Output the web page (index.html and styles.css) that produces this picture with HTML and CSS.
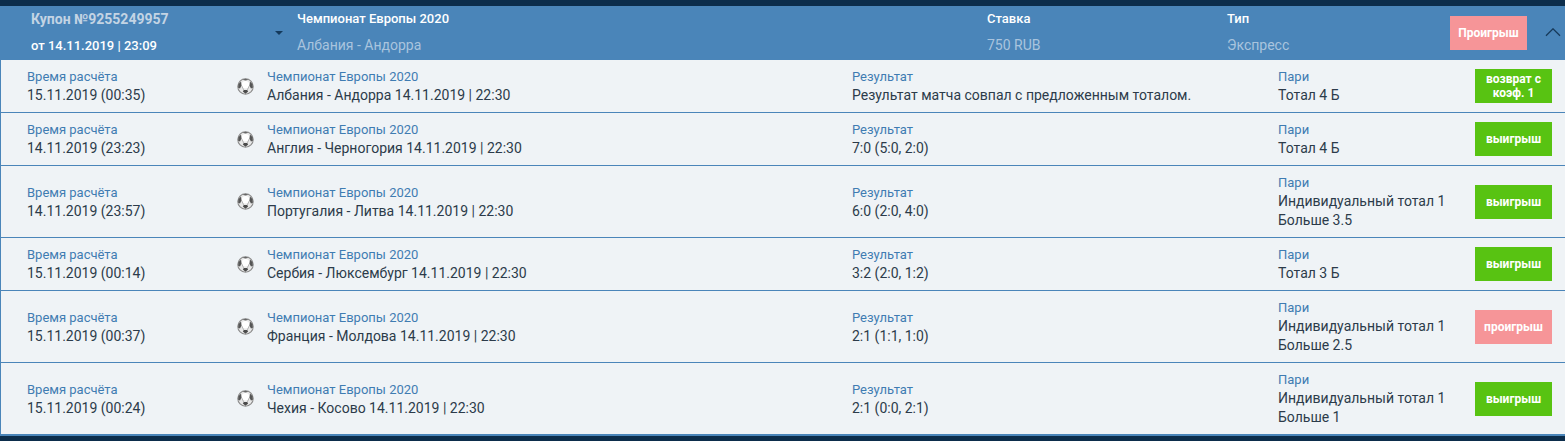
FILE: index.html
```html
<!DOCTYPE html>
<html lang="ru">
<head>
<meta charset="utf-8">
<title>Купон</title>
<link rel="stylesheet" href="styles.css">
</head>
<body>
<svg class="defs" width="0" height="0" aria-hidden="true">
  <defs>
    <symbol id="ball" viewBox="0 0 18 18">
      <circle cx="9" cy="9" r="8.2" fill="#e8e8e8" stroke="#8a8a8a" stroke-width="1.1"/>
      <circle cx="9" cy="7.2" r="4" fill="#fff"/>
      <path d="M1.4 6.5 4.200 3.800 4.800 8 3.200 11.200 1.200 10.400Z" fill="#555"/>
      <path d="M16.600 6.500 13.800 3.800 13.200 8 14.800 11.200 16.800 10.400Z" fill="#555"/>
      <path d="M5.600 1.800 9 2.600 12.400 1.800 9 .9Z" fill="#666"/>
      <path d="M7.200 12.800h3.600l1 1.400L9 16.800l-2.800-2.600Z" fill="#4a4a4a"/>
      <path d="M5 8.200 7 12.600M13 8.200 11 12.600" stroke="#a0a0a0" stroke-width=".8" fill="none"/>
    </symbol>
  </defs>
</svg>
<main class="coupon">
  <header class="head">
    <div class="head-id">
      <div class="num">Купон №9255249957</div>
      <div class="date">от 14.11.2019 | 23:09</div>
    </div>
    <div class="caret-cell"><span class="caret"></span></div>
    <div class="head-col">
      <div class="head-title">Чемпионат Европы 2020</div>
      <div class="head-val">Албания - Андорра</div>
    </div>
    <div class="head-col">
      <div class="head-title">Ставка</div>
      <div class="head-val">750 RUB</div>
    </div>
    <div class="head-col">
      <div class="head-title">Тип</div>
      <div class="head-val">Экспресс</div>
    </div>
    <div class="head-badge">Проигрыш</div>
    <svg class="chev" width="16" height="9" viewBox="0 0 16 9"><path d="M1 7.800 8 .8 15 7.800" fill="none" stroke="#173a5a" stroke-width="1.300"/></svg>
  </header>

  <section class="row">
    <div><div class="lbl">Время расчёта</div><div class="val">15.11.2019 (00:35)</div></div>
    <svg class="ball" width="17" height="17"><use href="#ball"/></svg>
    <div><div class="lbl">Чемпионат Европы 2020</div><div class="val">Албания - Андорра 14.11.2019 | 22:30</div></div>
    <div><div class="lbl">Результат</div><div class="val">Результат матча совпал с предложенным тоталом.</div></div>
    <div><div class="lbl">Пари</div><div class="val">Тотал 4 Б</div></div>
    <div class="badge win">возврат с коэф. 1</div>
  </section>
  <section class="row">
    <div><div class="lbl">Время расчёта</div><div class="val">14.11.2019 (23:23)</div></div>
    <svg class="ball" width="17" height="17"><use href="#ball"/></svg>
    <div><div class="lbl">Чемпионат Европы 2020</div><div class="val">Англия - Черногория 14.11.2019 | 22:30</div></div>
    <div><div class="lbl">Результат</div><div class="val">7:0 (5:0, 2:0)</div></div>
    <div><div class="lbl">Пари</div><div class="val">Тотал 4 Б</div></div>
    <div class="badge win">выигрыш</div>
  </section>
  <section class="row">
    <div><div class="lbl">Время расчёта</div><div class="val">14.11.2019 (23:57)</div></div>
    <svg class="ball" width="17" height="17"><use href="#ball"/></svg>
    <div><div class="lbl">Чемпионат Европы 2020</div><div class="val">Португалия - Литва 14.11.2019 | 22:30</div></div>
    <div><div class="lbl">Результат</div><div class="val">6:0 (2:0, 4:0)</div></div>
    <div><div class="lbl">Пари</div><div class="val">Индивидуальный тотал 1<br>Больше 3.5</div></div>
    <div class="badge win">выигрыш</div>
  </section>
  <section class="row">
    <div><div class="lbl">Время расчёта</div><div class="val">15.11.2019 (00:14)</div></div>
    <svg class="ball" width="17" height="17"><use href="#ball"/></svg>
    <div><div class="lbl">Чемпионат Европы 2020</div><div class="val">Сербия - Люксембург 14.11.2019 | 22:30</div></div>
    <div><div class="lbl">Результат</div><div class="val">3:2 (2:0, 1:2)</div></div>
    <div><div class="lbl">Пари</div><div class="val">Тотал 3 Б</div></div>
    <div class="badge win">выигрыш</div>
  </section>
  <section class="row">
    <div><div class="lbl">Время расчёта</div><div class="val">15.11.2019 (00:37)</div></div>
    <svg class="ball" width="17" height="17"><use href="#ball"/></svg>
    <div><div class="lbl">Чемпионат Европы 2020</div><div class="val">Франция - Молдова 14.11.2019 | 22:30</div></div>
    <div><div class="lbl">Результат</div><div class="val">2:1 (1:1, 1:0)</div></div>
    <div><div class="lbl">Пари</div><div class="val">Индивидуальный тотал 1<br>Больше 2.5</div></div>
    <div class="badge lose">проигрыш</div>
  </section>
  <section class="row">
    <div><div class="lbl">Время расчёта</div><div class="val">15.11.2019 (00:24)</div></div>
    <svg class="ball" width="17" height="17"><use href="#ball"/></svg>
    <div><div class="lbl">Чемпионат Европы 2020</div><div class="val">Чехия - Косово 14.11.2019 | 22:30</div></div>
    <div><div class="lbl">Результат</div><div class="val">2:1 (0:0, 2:1)</div></div>
    <div><div class="lbl">Пари</div><div class="val">Индивидуальный тотал 1<br>Больше 1</div></div>
    <div class="badge win">выигрыш</div>
  </section>
</main>
</body>
</html>
```
FILE: styles.css
```css
* { box-sizing: border-box; }
html, body { margin: 0; height: 100%; }
body {
  background: #0c2d4b;
  font-family: Roboto, "Liberation Sans", sans-serif;
  overflow: hidden;
  padding-top: 6px;
}
.defs { display: block; height: 0; }
.coupon { display: block; }
.head {
  display: grid;
  grid-template-columns: 244px 22px 690px 240px 223px 77px auto;
  align-items: center;
  height: 54px;
  padding-left: 31px;
  background: #4a85b9;
}
.head-id { display: flex; flex-direction: column; }
.num {
  font-size: 14px;
  font-weight: 700;
  line-height: 26px;
  color: #c3d4e4;
}
.date {
  font-size: 13px;
  font-weight: 500;
  line-height: 28px;
  color: #fff;
}
.caret-cell { align-self: stretch; padding-top: 25px; }
.caret {
  display: block;
  width: 0;
  height: 0;
  border-left: 4px solid transparent;
  border-right: 4px solid transparent;
  border-top: 4px solid #143a5c;
}
.head-col { padding-bottom: 2px; }
.head-title {
  font-size: 13px;
  font-weight: 500;
  line-height: 26px;
  color: #fff;
}
.head-val {
  font-size: 14px;
  line-height: 26px;
  color: #a9c4de;
}
.head-badge {
  height: 34px;
  display: flex;
  align-items: center;
  justify-content: center;
  background: #f69598;
  color: #fff;
  font-size: 12px;
  font-weight: 700;
}
.chev { margin: 0 0 1px 18px; }
.row {
  display: grid;
  grid-template-columns: 210px 30px 585px 426px 197px 77px;
  align-items: center;
  padding: 7px 0 7px 26px;
  background: #eff3f6;
  border-left: 1px solid #4a85b9;
  border-bottom: 1px solid #4a85b9;
}
.row:last-child { border-bottom-width: 2px; }
.lbl {
  font-size: 13px;
  line-height: 19px;
  color: #3f7cb2;
}
.val {
  font-size: 14px;
  line-height: 19px;
  color: #2c3b4a;
}
.ball { filter: blur(.5px); }
.badge {
  height: 34px;
  display: flex;
  align-items: center;
  justify-content: center;
  text-align: center;
  color: #fff;
  font-size: 12px;
  font-weight: 700;
  line-height: 14px;
  padding: 0 6px;
}
.win { background: #58c312; }
.lose { background: #f69598; }
```
